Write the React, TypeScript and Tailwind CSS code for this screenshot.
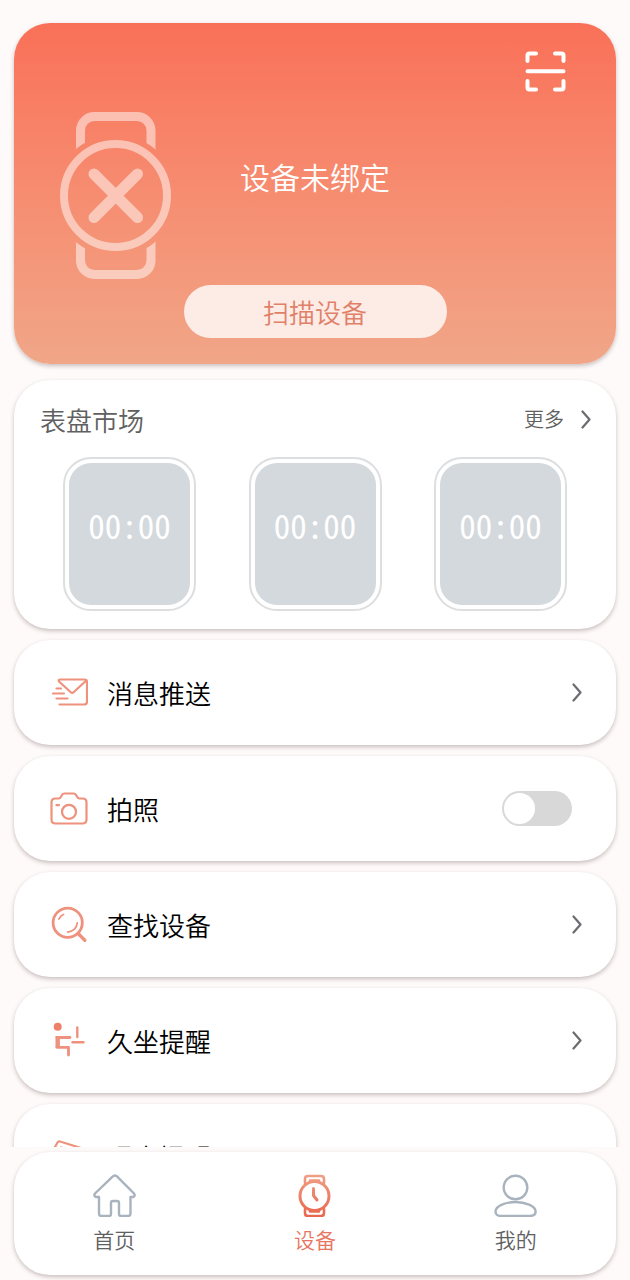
import React, { useState } from 'react';

const WatchOffIcon = () => (
  <svg width="112" height="167" viewBox="0 0 112 167" fill="none" stroke="#fff" strokeOpacity="0.5" className="shrink-0">
    <mask id="strap" maskUnits="userSpaceOnUse" x="0" y="0" width="112" height="167">
      <rect width="112" height="167" fill="#fff" stroke="none" />
      <circle cx="55.5" cy="83.5" r="61" fill="#000" stroke="none" />
    </mask>
    <rect x="20.5" y="4.5" width="70.5" height="158" rx="14" strokeWidth="9" mask="url(#strap)" />
    <circle cx="55.5" cy="83.5" r="51.5" strokeWidth="8" />
    <path d="M34 62 77.500 105.500M77.500 62 34 105.500" strokeWidth="11" strokeLinecap="round" />
  </svg>
);

const ScanIcon = () => (
  <svg width="41" height="41" viewBox="0 0 41 41" fill="none" stroke="#fff" strokeWidth="4" strokeLinecap="round" strokeLinejoin="round">
    <path d="M2.5 10V4.5q0-2 2-2H11M30 2.5h6.500q2 0 2 2V10M38.500 30v6.500q0 2-2 2H30M11 38.500H4.500q-2 0-2-2V30M2.500 20.200h36" />
  </svg>
);

const Chevron = () => (
  <svg width="10" height="19" viewBox="0 0 10 19" fill="none" stroke="#6b6b70" strokeWidth="2.2" strokeLinecap="round" strokeLinejoin="round">
    <path d="M1.500 1.500 8.500 9.500 1.500 17.500" />
  </svg>
);

const RowIcon = ({ children }: { children: React.ReactNode }) => (
  <svg width="38" height="38" viewBox="0 1 38 38" fill="none" stroke="#ee917d" strokeWidth="2.200" strokeLinecap="round" strokeLinejoin="round" className="shrink-0">
    {children}
  </svg>
);

const MailIcon = () => (
  <RowIcon>
    <path d="M9.500 31.500H34q3 0 3-3V9q0-2.500-2.500-2.500H10.500Q8 6.500 9 8.500L20.800 19.300q1.400 1.300 2.800 0L36 7.800" />
    <path d="M6.500 15.500h4.500M3 20.500h11M6.500 25.500h11" />
  </RowIcon>
);

const CameraIcon = () => (
  <RowIcon>
    <path d="M5.500 9.500h3.300q1.200 0 1.800-1.200l1.500-2.500q.700-1.300 2.200-1.300h9.400q1.500 0 2.200 1.300l1.500 2.500q.600 1.200 1.800 1.200H32.500q4 0 4 4v17q0 4-4 4H5.500q-4 0-4-4V13.500q0-4 4-4Z" />
    <circle cx="19" cy="22.800" r="7" />
    <path d="M6.500 16.200H9" />
  </RowIcon>
);

const SearchIcon = () => (
  <RowIcon>
    <circle cx="17.700" cy="17.700" r="14.600" strokeWidth="2.800" />
    <path d="m28.800 29.200 6 6" strokeWidth="3.400" />
    <path d="M8.900 14Q10.500 10.500 13.500 9.500M27.200 18q-.700 7.500-9.500 9.200" strokeWidth="1.800" />
  </RowIcon>
);

const SitIcon = () => (
  <RowIcon>
    <circle cx="7.700" cy="5.700" r="4" fill="#ee806a" stroke="none" />
    <path d="M7.700 15v12" strokeWidth="4.400" strokeLinecap="butt" />
    <path d="M7 16.500H20M7 26.300h11.500v7.700" strokeWidth="2.800" />
    <path d="M22.500 21.300h11M27.300 6.500v9.500" strokeWidth="2.400" />
  </RowIcon>
);

const CupIcon = () => (
  <RowIcon>
    <path d="M4.500 11 7.500 5.500q.800-1.500 2.500-1L31 11l-7 22q-.700 2-2.700 1.400L9 30q-2-.600-1.900-2.700Z" />
    <path d="M11 10.500 27 15.500" />
  </RowIcon>
);

const HomeIcon = () => (
  <svg width="43" height="43" viewBox="0 0 43 43" fill="none" stroke="#a9b3be" strokeWidth="2.400" strokeLinejoin="round">
    <path d="M19.300 2.800q2.700-2.600 5.200 0L41 19.500q1.700 2.500-1 3.500H37.500v16.500q0 2.500-2.500 2.500H28q-2 0-2-2V29q0-2-2-2h-4q-2 0-2 2V40q0 2-2 2H8.500Q6 42 6 39.500V23H3Q.300 22 2 19.500Z" />
  </svg>
);

const WatchIcon = () => (
  <svg width="43" height="43" viewBox="0 0 43 43" fill="none" stroke="url(#nav-watch)" strokeWidth="2.600" strokeLinecap="round" strokeLinejoin="round">
    <defs>
      <linearGradient id="nav-watch" gradientUnits="userSpaceOnUse" x1="0" y1="0" x2="0" y2="43">
        <stop stopColor="#f0a088" />
        <stop offset="1" stopColor="#e9654c" />
      </linearGradient>
    </defs>
    <path d="M12 9V5q0-3 3-3h13q3 0 3 3v4M12 35v4q0 3 3 3h13q3 0 3-3v-4M17 6.500h9M17 37.500h9" />
    <circle cx="21.500" cy="22" r="14.500" strokeWidth="3" />
    <path d="M20.500 14.500V21.500L24 26" strokeWidth="3" />
  </svg>
);

const UserIcon = () => (
  <svg width="43" height="43" viewBox="0 0 43 43" fill="none" stroke="#a9b3be" strokeWidth="2.400">
    <circle cx="21.500" cy="13.500" r="11.800" />
    <path d="M21.500 28C31 28 41.600 32 41.600 37.500q0 4.500-6 4.500H7.500q-6 0-6-4.500C1.500 32 12 28 21.500 28Z" />
  </svg>
);

const rows = [
  { label: '消息推送', Icon: MailIcon },
  { label: '拍照', Icon: CameraIcon, toggle: true },
  { label: '查找设备', Icon: SearchIcon },
  { label: '久坐提醒', Icon: SitIcon },
  { label: '喝水提醒', Icon: CupIcon },
];

const tabs = [
  { label: '首页', Icon: HomeIcon },
  { label: '设备', Icon: WatchIcon, active: true },
  { label: '我的', Icon: UserIcon },
];

const card = 'rounded-[36px] bg-white shadow-[0_2px_4px_rgba(60,40,40,0.28)]';
const rowClass = `${card} flex h-[105px] shrink-0 items-center pl-9 text-[26px] text-black`;

export default function App() {
  const [camera, setCamera] = useState(false);

  return (
    <div className="flex h-screen flex-col bg-[#fefaf9] font-['Noto_Sans_CJK_SC',sans-serif] font-[350]">
      <main className="flex min-h-0 flex-1 flex-col gap-[11px] overflow-hidden px-[14px] pt-[23px]">
        {/* Device status */}
        <section className="mb-[5px] flex shrink-0 flex-col rounded-[36px] bg-linear-to-b from-[#f97058] to-[#f1a688] pt-7 pb-[26px] shadow-[0_2px_4px_rgba(60,40,40,0.28)]">
          <button type="button" aria-label="扫一扫" className="mr-[50px] self-end">
            <ScanIcon />
          </button>
          <div className="mt-5 grid grid-cols-[1fr_auto_1fr] items-center">
            <div className="pl-[46px]">
              <WatchOffIcon />
            </div>
            <h1 className="pb-10 text-[30px] leading-10 text-white">设备未绑定</h1>
          </div>
          <button type="button" className="mt-[6px] h-[53px] w-[263px] self-center rounded-full bg-[#fdebe5] text-[26px] text-[#e08069]">
            扫描设备
          </button>
        </section>

        {/* Watch face market */}
        <section className={`${card} shrink-0 pt-5 pb-[18px]`}>
          <div className="flex h-[38px] items-center justify-between pr-[25px] pl-[26px] text-[#606060]">
            <h2 className="text-[26px]">表盘市场</h2>
            <a href="#more" className="flex items-center gap-[17px] text-[20px]">
              更多
              <Chevron />
            </a>
          </div>
          <div className="mt-[19px] flex justify-between px-[49px]">
            {[1, 2, 3].map((face) => (
              <div key={face} className="h-[154px] w-[133px] rounded-[28px] border-2 border-[#dddee0] p-1">
                <div className="flex h-full items-center justify-center rounded-[22px] bg-[#d4d9dd] pb-4 font-['Noto_Sans_Mono_CJK_SC','Liberation_Mono',monospace] text-[33px] font-light text-white slashed-zero">
                  00:00
                </div>
              </div>
            ))}
          </div>
        </section>

        {rows.map(({ label, Icon, toggle }) =>
          toggle ? (
            <label key={label} className={rowClass}>
              <Icon />
              <span className="ml-[19px] flex-1">{label}</span>
              <input
                type="checkbox"
                role="switch"
                checked={camera}
                onChange={(e) => setCamera(e.target.checked)}
                className="mr-11 h-[35px] w-[70px] appearance-none rounded-full bg-[#d8d8d8] p-[2px] before:block before:size-[31px] before:rounded-full before:bg-white checked:bg-[#ee806a] checked:before:ml-auto"
              />
            </label>
          ) : (
            <a key={label} href={`#${label}`} className={`${rowClass} pr-[34px]`}>
              <Icon />
              <span className="ml-[19px] flex-1">{label}</span>
              <Chevron />
            </a>
          )
        )}
      </main>

      {/* Bottom tabs */}
      <nav className={`${card} mx-[14px] mt-[5px] mb-[5px] grid h-[123px] shrink-0 grid-cols-3 text-[21px]`}>
        {tabs.map(({ label, Icon, active }) => (
          <a
            key={label}
            href={`#${label}`}
            className={`flex flex-col items-center pt-[22px] ${active ? 'text-[#e9765f]' : 'text-[#606060]'}`}
          >
            <Icon />
            <span className="mt-2 leading-7">{label}</span>
          </a>
        ))}
      </nav>
    </div>
  );
}
